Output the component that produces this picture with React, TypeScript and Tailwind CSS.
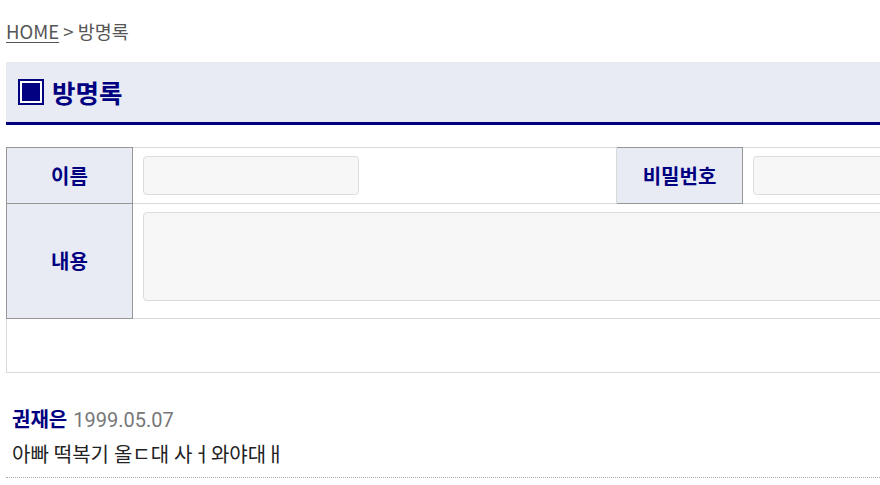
import React from "react";

export default function App() {
  return (
    <div className="w-[880px] h-[485px] overflow-hidden bg-white">
      <div className="w-[1240px] pl-[6px] font-['Noto_Sans_CJK_KR','Noto_Sans',sans-serif]">
        <div className="h-[62px] pt-[17px] text-[18.5px] leading-[28px] text-[#555]">
          <a className="underline underline-offset-[3px] decoration-[1px]">HOME</a>
          <span> &gt; 방명록</span>
        </div>
        <div className="h-[63px] bg-[#e8ebf4] border-b-[3px] border-[#000080] flex items-center pl-[12px]">
          <div className="w-[26px] h-[26px] border-2 border-[#000080] p-[2px] bg-white">
            <div className="w-full h-full bg-[#000080]" />
          </div>
          <h2 className="ml-[8px] text-[25.5px] leading-[30px] font-bold text-[#000080]">방명록</h2>
        </div>
        <table className="mt-[22px] w-[1220px] border-collapse table-fixed border border-[#d9d9d9]">
          <colgroup>
            <col className="w-[126px]" />
            <col className="w-[484px]" />
            <col className="w-[126px]" />
            <col />
          </colgroup>
          <tbody>
            <tr className="h-[55px]">
              <th className="bg-[#e8ebf4] border border-[#969696] text-[20px] font-bold text-[#000080] text-center">이름</th>
              <td className="border border-[#d9d9d9] px-[10px] py-[8px]">
                <div className="w-[216px] h-[39px] bg-[#f7f7f7] border border-[#dcdcdc] rounded-[4px]" />
              </td>
              <th className="bg-[#e8ebf4] border border-[#969696] text-[20px] font-bold text-[#000080] text-center">비밀번호</th>
              <td className="border border-[#d9d9d9] px-[10px] py-[8px]">
                <div className="w-[216px] h-[39px] bg-[#f7f7f7] border border-[#dcdcdc] rounded-[4px]" />
              </td>
            </tr>
            <tr className="h-[115px]">
              <th className="bg-[#e8ebf4] border border-[#969696] text-[20px] font-bold text-[#000080] text-center">내용</th>
              <td colSpan={3} className="border border-[#d9d9d9] px-[10px] pt-[8px] pb-[17px]">
                <div className="w-full h-[89px] bg-[#f7f7f7] border border-[#dcdcdc] rounded-[4px]" />
              </td>
            </tr>
            <tr className="h-[54px]">
              <td colSpan={4} className="border border-[#d9d9d9]" />
            </tr>
          </tbody>
        </table>
        <div className="mt-[31px] pl-[6px] pb-[7px] border-b border-dotted border-[#aaa] font-['Roboto','Noto_Sans_CJK_KR',sans-serif] text-[20px] leading-[30px]">
          <div>
            <span className="font-bold text-[#000080] font-['Noto_Sans_CJK_KR',sans-serif]">권재은</span>
            <span className="ml-[6px] text-[#777]">1999.05.07</span>
          </div>
          <div className="mt-[5px] text-[#222]">아빠 떡복기 올ㄷ대 사ㅓ와야대ㅐ</div>
        </div>
      </div>
    </div>
  );
}
